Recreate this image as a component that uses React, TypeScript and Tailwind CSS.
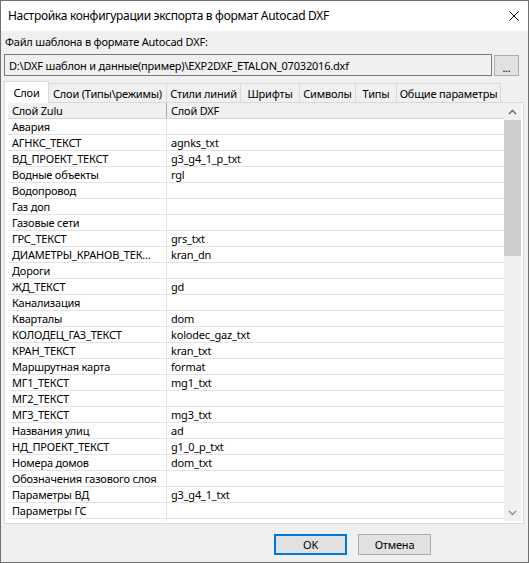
const rows: [string, string][] = [
    ['Авария', ''],
    ['АГНКС_ТЕКСТ', 'agnks_txt'],
    ['ВД_ПРОЕКТ_ТЕКСТ', 'g3_g4_1_p_txt'],
    ['Водные объекты', 'rgl'],
    ['Водопровод', ''],
    ['Газ доп', ''],
    ['Газовые сети', ''],
    ['ГРС_ТЕКСТ', 'grs_txt'],
    ['ДИАМЕТРЫ_КРАНОВ_ТЕК...', 'kran_dn'],
    ['Дороги', ''],
    ['ЖД_ТЕКСТ', 'gd'],
    ['Канализация', ''],
    ['Кварталы', 'dom'],
    ['КОЛОДЕЦ_ГАЗ_ТЕКСТ', 'kolodec_gaz_txt'],
    ['КРАН_ТЕКСТ', 'kran_txt'],
    ['Маршрутная карта', 'format'],
    ['МГ1_ТЕКСТ', 'mg1_txt'],
    ['МГ2_ТЕКСТ', ''],
    ['МГ3_ТЕКСТ', 'mg3_txt'],
    ['Названия улиц', 'ad'],
    ['НД_ПРОЕКТ_ТЕКСТ', 'g1_0_p_txt'],
    ['Номера домов', 'dom_txt'],
    ['Обозначения газового слоя', ''],
    ['Параметры ВД', 'g3_g4_1_txt'],
    ['Параметры ГС', ''],
    ['Параметры НД', 'g1_0_txt'],
];

const tabs: { label: string; w: string }[] = [
    { label: 'Слои (Типы\\режимы)', w: 'w-[118px]' },
    { label: 'Стили линий', w: 'w-[74px]' },
    { label: 'Шрифты', w: 'w-[59px]' },
    { label: 'Символы', w: 'w-[56px]' },
    { label: 'Типы', w: 'w-[41px]' },
    { label: 'Общие параметры', w: 'w-[104px]' },
];

export default function App() {
    return (
        <div className="w-[529px] h-[563px] flex flex-col border border-[#707070] font-['Noto_Sans','Open_Sans',sans-serif] text-[11px] tracking-[-0.2px] text-black bg-[#f0f0f0] overflow-hidden">
            {/* Title bar */}
            <div className="h-[30px] shrink-0 bg-white flex items-center justify-between pl-[7px] pr-[9px]">
                <span className="text-[12px] tracking-[-0.3px]">Настройка конфигурации экспорта в формат Autocad DXF</span>
                <svg width="10" height="10" viewBox="0 0 10 10">
                    <path d="M0.5 0.5 L9.5 9.5 M9.5 0.5 L0.5 9.5" stroke="#000" strokeWidth="1" />
                </svg>
            </div>

            <div className="flex-1 flex flex-col px-[3px]">
                <div className="mt-[3px] pl-[1px] leading-[15px]">Файл шаблона в формате Autocad DXF:</div>

                {/* File path */}
                <div className="mt-[5px] flex items-start">
                    <div className="w-[488px] h-[22px] border border-[#7a7a7a] bg-[#f0f0f0] px-[4px] flex items-center leading-none whitespace-nowrap">
                        D:\DXF шаблон и данные(пример)\EXP2DXF_ETALON_07032016.dxf
                    </div>
                    <div className="ml-[2px] mt-[1px] w-[25px] h-[21px] border border-[#adadad] bg-[#e1e1e1] flex items-center justify-center pt-[3px] leading-none">
                        ...
                    </div>
                </div>

                {/* Tabs */}
                <div className="mt-[5px] h-[21px] flex items-end">
                    <div className="relative z-10 -mb-[1px] w-[45px] h-[22px] bg-white border border-b-0 border-[#d9d9d9] flex items-center justify-center leading-none">
                        Слои
                    </div>
                    {tabs.map((t) => (
                        <div
                            key={t.label}
                            className={`${t.w} h-[19px] border border-l-0 border-b-0 border-[#d9d9d9] bg-[#f0f0f0] flex items-center justify-center leading-none whitespace-nowrap`}
                        >
                            {t.label}
                        </div>
                    ))}
                </div>

                {/* Tab panel */}
                <div className="w-[520px] h-[422px] border border-[#d9d9d9] bg-white pl-[3px] pr-[2px] pb-[2px]">
                    <div className="w-[513px] h-[418px] flex">
                        <div className="flex-1 flex flex-col min-w-0">
                            <div className="h-[16px] shrink-0 flex bg-[#f0f0f0] border-b border-[#d5d5d5]">
                                <div className="w-[159px] border-r border-[#a9a9a9] pl-[4px] leading-[15px]">Слой Zulu</div>
                                <div className="flex-1 pl-[4px] leading-[15px]">Слой DXF</div>
                            </div>
                            <div className="flex-1 overflow-hidden">
                                {rows.map(([zulu, dxf]) => (
                                    <div key={zulu} className="h-[16px] flex border-b border-[#e3e3e3]">
                                        <div className="w-[159px] border-r border-[#e3e3e3] pl-[4px] leading-[15px] whitespace-nowrap overflow-hidden">
                                            {zulu}
                                        </div>
                                        <div className="flex-1 pl-[4px] leading-[15px] whitespace-nowrap">{dxf}</div>
                                    </div>
                                ))}
                            </div>
                        </div>

                        {/* Scrollbar */}
                        <div className="w-[17px] shrink-0 flex flex-col bg-[#f0f0f0]">
                            <div className="h-[17px] flex items-center justify-center">
                                <svg width="9" height="6" viewBox="0 0 9 6">
                                    <path d="M1 5 L4.5 1.5 L8 5" fill="none" stroke="#606060" strokeWidth="1.3" />
                                </svg>
                            </div>
                            <div className="h-[136px] bg-[#cdcdcd]" />
                            <div className="flex-1" />
                            <div className="h-[17px] flex items-center justify-center">
                                <svg width="9" height="6" viewBox="0 0 9 6">
                                    <path d="M1 1 L4.5 4.5 L8 1" fill="none" stroke="#8a8a8a" strokeWidth="1.3" />
                                </svg>
                            </div>
                        </div>
                    </div>
                </div>

                {/* Buttons */}
                <div className="mt-[10px] pl-[270px] flex">
                    <div className="w-[73px] h-[21px] border-2 border-[#0078d7] bg-[#e1e1e1] flex items-center justify-center leading-none">
                        OK
                    </div>
                    <div className="ml-[11px] w-[73px] h-[21px] border border-[#adadad] bg-[#e1e1e1] flex items-center justify-center leading-none">
                        Отмена
                    </div>
                </div>
            </div>
        </div>
    );
}
